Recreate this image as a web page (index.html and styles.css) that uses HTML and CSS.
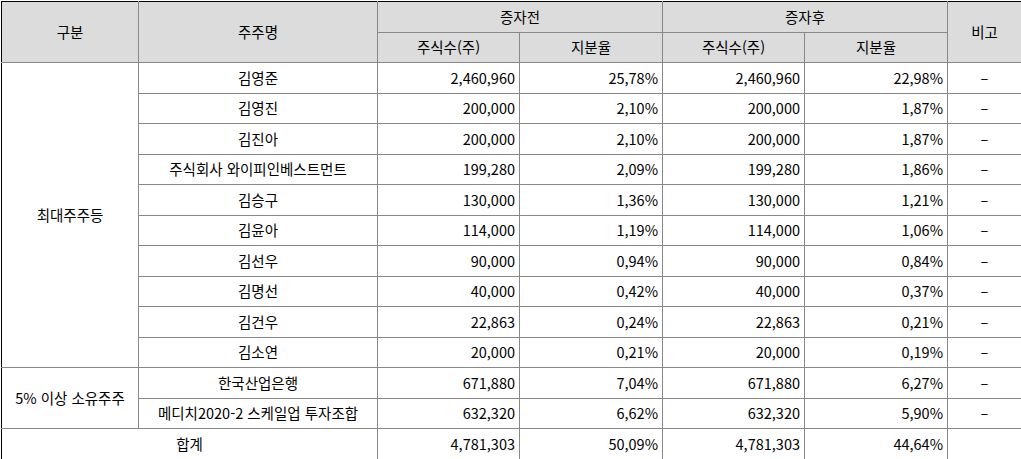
FILE: index.html
```html
<!DOCTYPE html>
<html lang="ko">
<head>
<meta charset="utf-8">
<title>주주현황</title>
<link rel="stylesheet" href="styles.css">
</head>
<body>
<table class="sheet">
  <colgroup>
    <col class="c-type">
    <col class="c-name">
    <col class="c-num">
    <col class="c-pct">
    <col class="c-num">
    <col class="c-pct">
    <col class="c-note">
  </colgroup>
  <thead>
    <tr>
      <th rowspan="2">구분</th>
      <th rowspan="2">주주명</th>
      <th colspan="2">증자전</th>
      <th colspan="2">증자후</th>
      <th rowspan="2">비고</th>
    </tr>
    <tr>
      <th>주식수(주)</th>
      <th>지분율</th>
      <th>주식수(주)</th>
      <th>지분율</th>
    </tr>
  </thead>
  <tbody>
    <tr>
      <td rowspan="10" class="ctr">최대주주등</td>
      <td class="ctr">김영준</td>
      <td class="num">2,460,960</td><td class="num">25,78%</td>
      <td class="num">2,460,960</td><td class="num">22,98%</td>
      <td class="ctr">–</td>
    </tr>
    <tr>
      <td class="ctr">김영진</td>
      <td class="num">200,000</td><td class="num">2,10%</td>
      <td class="num">200,000</td><td class="num">1,87%</td>
      <td class="ctr">–</td>
    </tr>
    <tr>
      <td class="ctr">김진아</td>
      <td class="num">200,000</td><td class="num">2,10%</td>
      <td class="num">200,000</td><td class="num">1,87%</td>
      <td class="ctr">–</td>
    </tr>
    <tr>
      <td class="ctr">주식회사 와이피인베스트먼트</td>
      <td class="num">199,280</td><td class="num">2,09%</td>
      <td class="num">199,280</td><td class="num">1,86%</td>
      <td class="ctr">–</td>
    </tr>
    <tr>
      <td class="ctr">김승구</td>
      <td class="num">130,000</td><td class="num">1,36%</td>
      <td class="num">130,000</td><td class="num">1,21%</td>
      <td class="ctr">–</td>
    </tr>
    <tr>
      <td class="ctr">김윤아</td>
      <td class="num">114,000</td><td class="num">1,19%</td>
      <td class="num">114,000</td><td class="num">1,06%</td>
      <td class="ctr">–</td>
    </tr>
    <tr>
      <td class="ctr">김선우</td>
      <td class="num">90,000</td><td class="num">0,94%</td>
      <td class="num">90,000</td><td class="num">0,84%</td>
      <td class="ctr">–</td>
    </tr>
    <tr>
      <td class="ctr">김명선</td>
      <td class="num">40,000</td><td class="num">0,42%</td>
      <td class="num">40,000</td><td class="num">0,37%</td>
      <td class="ctr">–</td>
    </tr>
    <tr>
      <td class="ctr">김건우</td>
      <td class="num">22,863</td><td class="num">0,24%</td>
      <td class="num">22,863</td><td class="num">0,21%</td>
      <td class="ctr">–</td>
    </tr>
    <tr>
      <td class="ctr">김소연</td>
      <td class="num">20,000</td><td class="num">0,21%</td>
      <td class="num">20,000</td><td class="num">0,19%</td>
      <td class="ctr">–</td>
    </tr>
    <tr>
      <td rowspan="2" class="ctr">5% 이상 소유주주</td>
      <td class="ctr">한국산업은행</td>
      <td class="num">671,880</td><td class="num">7,04%</td>
      <td class="num">671,880</td><td class="num">6,27%</td>
      <td class="ctr">–</td>
    </tr>
    <tr>
      <td class="ctr">메디치2020-2 스케일업 투자조합</td>
      <td class="num">632,320</td><td class="num">6,62%</td>
      <td class="num">632,320</td><td class="num">5,90%</td>
      <td class="ctr">–</td>
    </tr>
    <tr>
      <td colspan="2" class="ctr">합계</td>
      <td class="num">4,781,303</td><td class="num">50,09%</td>
      <td class="num">4,781,303</td><td class="num">44,64%</td>
      <td class="ctr"></td>
    </tr>
  </tbody>
</table>
</body>
</html>
```

FILE: styles.css
```css
html, body {
  margin: 0;
  padding: 0;
  background: #ffffff;
}

body {
  padding: 1px 0 0 1px;
  font-family: "Noto Sans CJK KR", "Noto Sans", sans-serif;
  font-size: 14.5px;
  color: #000000;
}

.sheet {
  border-collapse: collapse;
  table-layout: fixed;
  width: 1019px;
  border: 1px solid #000000;
}

.c-type { width: 137px; }
.c-name { width: 239px; }
.c-num { width: 142px; }
.c-pct { width: 143px; }
.c-note { width: 74px; }

.sheet th,
.sheet td {
  border: 1px solid #888888;
  height: 29.5px;
  padding: 0 4px;
  vertical-align: middle;
  white-space: nowrap;
  line-height: 18px;
}

.sheet tr {
  height: 30.5px;
}

.sheet th {
  background: #dcdcdc;
  font-weight: normal;
  text-align: center;
}

.sheet thead tr:first-child th {
  border-top: 1px solid #000000;
}

.sheet th:first-child,
.sheet td:first-child {
  border-left: 1px solid #000000;
}

.sheet tr > :last-child {
  border-right: 1px solid #000000;
}

.ctr {
  text-align: center;
}

.num {
  text-align: right;
}
```
